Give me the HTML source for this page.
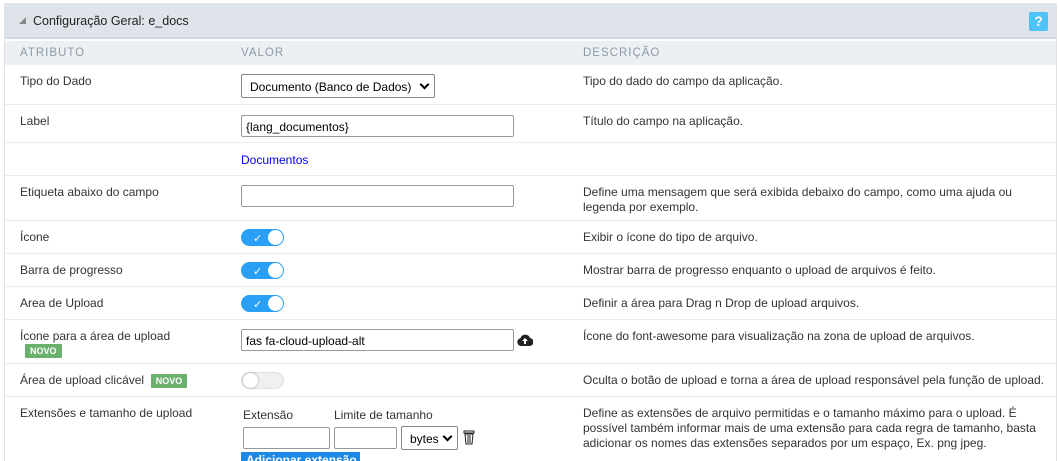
<!DOCTYPE html>
<html><head><meta charset="utf-8"><style>
*{box-sizing:border-box;margin:0;padding:0}
html,body{width:1058px;height:461px;overflow:hidden}
body{background:#fff;font-family:"Liberation Sans",Arial,sans-serif;font-size:12px;color:#333;position:relative}
.frame{position:absolute;left:4px;top:3px;width:1053px;height:470px;border:1px solid #dde2e8;border-bottom:none}
.top{position:absolute;left:5px;top:4px;width:1051px;height:35px;background:#dfe4eb;border-bottom:2px solid #d3d9e0}
.top .t{position:absolute;left:28px;top:10px;font-size:12.5px;color:#222}
.tri{position:absolute;left:14px;top:13px;width:0;height:0;border-left:7px solid transparent;border-bottom:7px solid #888}
.help{position:absolute;left:1024px;top:8px;width:19px;height:19px;background:#4fc3f7;border-radius:2px;color:#fff;font-weight:bold;font-size:14px;text-align:center;line-height:19px}
.hdr{position:absolute;left:5px;top:41px;width:1051px;height:24px;background:#ecf0f3}
.hdr span{position:absolute;top:6px;font-size:11.5px;letter-spacing:1px;color:#8d9aa6}
.row{position:absolute;left:5px;width:1051px;border-bottom:1px solid #e9edf1}
.a{position:absolute;left:15px;top:9px}
.d{position:absolute;left:578px;top:9px;line-height:15px}
.inp{position:absolute;height:22px;border:1px solid #999;border-radius:2px;background:#fff;font-size:12px;padding:4px 4px;color:#000}
.sel{position:absolute;height:24px;border:1px solid #888;border-radius:2px;background:#fff;font-size:12px;padding:5px 8px;color:#000;white-space:nowrap}
.chev{position:absolute;right:6px;top:6px;width:7px;height:7px;border-right:2px solid #000;border-bottom:2px solid #000;transform:rotate(45deg)}
.tg{position:absolute;width:43px;height:17px;border-radius:9px;background:#29a0f5}
.tg::after{content:"";position:absolute;right:1px;top:1px;width:15px;height:15px;border-radius:50%;background:#fff}
.tg b{position:absolute;left:12px;top:3px;color:#fff;font-size:11px;font-weight:normal}
.off{background:#eef0f2;border:1px solid #dcdfe3}
.off::after{left:1px;right:auto;top:0;box-shadow:0 0 2px #999}
.novo{display:inline-block;background:#6ab06d;color:#fff;font-size:9px;font-weight:bold;padding:2px 5px;border-radius:1px}
</style></head><body>
<div class="frame"></div>
<div class="top"><div class="tri"></div><div class="t">Configuração Geral: e_docs</div><div class="help">?</div></div>
<div class="hdr"><span style="left:15px">ATRIBUTO</span><span style="left:236px">VALOR</span><span style="left:578px">DESCRIÇÃO</span></div>

<div class="row" style="top:65px;height:40px"><div class="a">Tipo do Dado</div>
<div class="sel" style="left:236px;top:9px;width:194px">Documento (Banco de Dados)<i class="chev"></i></div>
<div class="d">Tipo do dado do campo da aplicação.</div></div>

<div class="row" style="top:105px;height:38px"><div class="a">Label</div>
<div class="inp" style="left:236px;top:10px;width:273px">{lang_documentos}</div>
<div class="d">Título do campo na aplicação.</div></div>

<div class="row" style="top:143px;height:33px"><div style="position:absolute;left:236px;top:10px;color:#0000ee">Documentos</div></div>

<div class="row" style="top:176px;height:45px"><div class="a">Etiqueta abaixo do campo</div>
<div class="inp" style="left:236px;top:9px;width:273px"></div>
<div class="d">Define uma mensagem que será exibida debaixo do campo, como uma ajuda ou<br>legenda por exemplo.</div></div>

<div class="row" style="top:221px;height:33px"><div class="a">Ícone</div>
<div class="tg" style="left:236px;top:8px"><b>✓</b></div><div class="d">Exibir o ícone do tipo de arquivo.</div></div>

<div class="row" style="top:254px;height:33px"><div class="a">Barra de progresso</div>
<div class="tg" style="left:236px;top:8px"><b>✓</b></div><div class="d">Mostrar barra de progresso enquanto o upload de arquivos é feito.</div></div>

<div class="row" style="top:287px;height:33px"><div class="a">Area de Upload</div>
<div class="tg" style="left:236px;top:8px"><b>✓</b></div><div class="d">Definir a área para Drag n Drop de upload arquivos.</div></div>

<div class="row" style="top:320px;height:44px"><div class="a">Ícone para a área de upload<br><span class="novo" style="margin-left:5px">NOVO</span></div>
<div class="inp" style="left:236px;top:9px;width:273px">fas fa-cloud-upload-alt</div>
<svg style="position:absolute;left:512px;top:14px" width="16" height="12" viewBox="0 0 16 12"><path d="M4 12a4 4 0 0 1-.5-7.9A5 5 0 0 1 13 4a4 4 0 0 1-1 8z" fill="#222"/><path d="M8 4l-3 3h2v3h2V7h2z" fill="#fff"/></svg>
<div class="d">Ícone do font-awesome para visualização na zona de upload de arquivos.</div></div>

<div class="row" style="top:364px;height:33px"><div class="a">Área de upload clicável &nbsp;<span class="novo">NOVO</span></div>
<div class="tg off" style="left:236px;top:8px"></div>
<div class="d">Oculta o botão de upload e torna a área de upload responsável pela função de upload.</div></div>

<div class="row" style="top:397px;height:70px;border:none"><div class="a">Extensões e tamanho de upload</div>
<div style="position:absolute;left:238px;top:11px">Extensão</div>
<div style="position:absolute;left:329px;top:11px">Limite de tamanho</div>
<div class="inp" style="left:238px;top:30px;width:87px"></div>
<div class="inp" style="left:329px;top:30px;width:63px"></div>
<div class="sel" style="left:396px;top:29px;width:57px;padding-left:8px">bytes<i class="chev"></i></div>
<svg style="position:absolute;left:458px;top:33px" width="12" height="15" viewBox="0 0 12 15"><rect x="1" y="1" width="10" height="2" fill="none" stroke="#222"/><path d="M2 4h8l-1 10H3z" fill="none" stroke="#222"/><path d="M5 5v8M7 5v8" stroke="#222"/></svg>
<div style="position:absolute;left:236px;top:55px;width:119px;height:16px;background:#1e88e5;color:#fff;font-weight:bold;padding:1px 5px;white-space:nowrap;overflow:hidden">Adicionar extensão</div>
<div class="d">Define as extensões de arquivo permitidas e o tamanho máximo para o upload. É<br>possível também informar mais de uma extensão para cada regra de tamanho, basta<br>adicionar os nomes das extensões separados por um espaço, Ex. png jpeg.</div></div>
</body></html>
